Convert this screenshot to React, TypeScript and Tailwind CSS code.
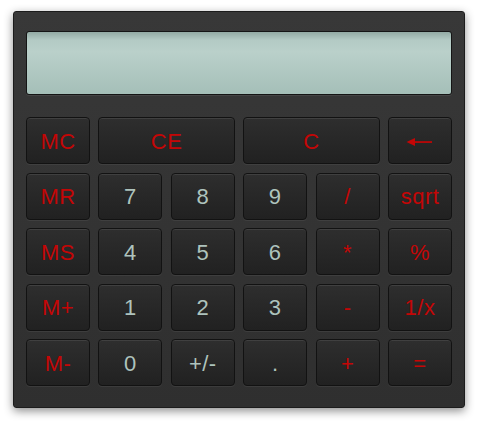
import type { ReactNode } from 'react';

type Key = {
  label: ReactNode;
  tone: 'red' | 'grey';
  span?: 2;
};

const BackArrow = () => (
  <svg width="28" height="10" viewBox="0 0 28 10" className="block">
    <path d="M0.5 5 L9 1 L9 9 Z" fill="#c40606" />
    <rect x="8" y="4.2" width="18" height="1.7" fill="#c40606" />
  </svg>
);

const KEYS: Key[] = [
  { label: 'MC', tone: 'red' },
  { label: 'CE', tone: 'red', span: 2 },
  { label: 'C', tone: 'red', span: 2 },
  { label: <BackArrow />, tone: 'red' },

  { label: 'MR', tone: 'red' },
  { label: '7', tone: 'grey' },
  { label: '8', tone: 'grey' },
  { label: '9', tone: 'grey' },
  { label: '/', tone: 'red' },
  { label: 'sqrt', tone: 'red' },

  { label: 'MS', tone: 'red' },
  { label: '4', tone: 'grey' },
  { label: '5', tone: 'grey' },
  { label: '6', tone: 'grey' },
  { label: '*', tone: 'red' },
  { label: '%', tone: 'red' },

  { label: 'M+', tone: 'red' },
  { label: '1', tone: 'grey' },
  { label: '2', tone: 'grey' },
  { label: '3', tone: 'grey' },
  { label: '-', tone: 'red' },
  { label: '1/x', tone: 'red' },

  { label: 'M-', tone: 'red' },
  { label: '0', tone: 'grey' },
  { label: '+/-', tone: 'grey' },
  { label: '.', tone: 'grey' },
  { label: '+', tone: 'red' },
  { label: '=', tone: 'red' },
];

export default function App() {
  return (
    <div className="h-[423px] w-[479px] bg-white pl-[13px] pt-[11px] font-['Liberation_Sans',Arial,sans-serif]">
      <div className="h-[397px] w-[452px] rounded-[3px] border border-[#1c1c1c] bg-[linear-gradient(#383838,#2f2f2f)] px-[12px] pt-[19px] shadow-[0_3px_10px_rgba(0,0,0,0.45)]">
        <div className="h-[64px] rounded-[3px] border border-[#151515] bg-[linear-gradient(#93aaa4_0px,#b3cac4_8px,#bad0ca_20px,#a5bfb8_100%)] shadow-[0_1px_0_rgba(255,255,255,0.08)]" />

        <div className="mt-[22px] grid grid-cols-6 gap-x-[8.4px] gap-y-[8.5px]">
          {KEYS.map((key, index) => (
            <button
              key={index}
              type="button"
              className={`flex h-[47px] items-center justify-center rounded-[4px] border border-[#121212] bg-[linear-gradient(#2e2e2e,#212121)] pt-[2px] text-[22px] leading-none tracking-[0.5px] shadow-[inset_0_1px_0_rgba(255,255,255,0.09),0_1px_0_rgba(255,255,255,0.06)] ${
                key.span === 2 ? 'col-span-2' : ''
              } ${key.tone === 'red' ? 'text-[#c40606]' : 'text-[#aec3bd]'}`}
            >
              {key.label}
            </button>
          ))}
        </div>
      </div>
    </div>
  );
}
